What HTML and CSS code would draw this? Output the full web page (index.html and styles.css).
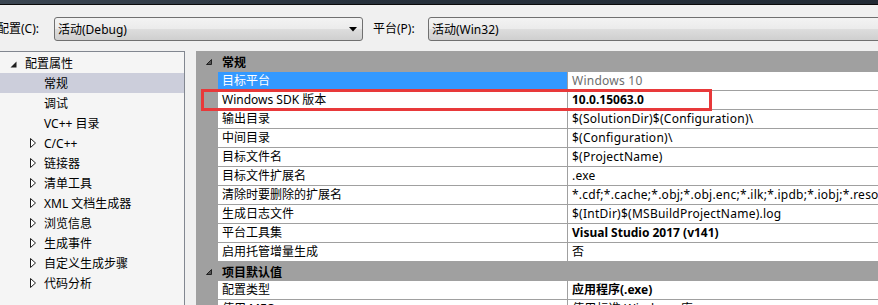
FILE: index.html
```html
<!DOCTYPE html>
<html>
<head>
<meta charset="utf-8">
<link rel="stylesheet" href="styles.css">
</head>
<body>
<div class="titlebar"></div>
<div class="toolbar">
  <span class="lbl cfg">配置(C):</span>
  <div class="combo c1"><span class="ctext">活动(Debug)</span><svg class="arrow" width="8" height="5" viewBox="0 0 8 5"><polygon points="0,0 8,0 4,4.5" fill="#000"/></svg></div>
  <span class="lbl plat">平台(P):</span>
  <div class="combo c2"><span class="ctext">活动(Win32)</span></div>
</div>
<div class="main">
  <div class="tree">
    <div class="node lvl0"><svg class="exp" width="7" height="7" viewBox="0 0 7 7"><polygon points="6.5,0.5 6.5,6.5 0.5,6.5" fill="#1e1e1e"/></svg><span>配置属性</span></div>
    <div class="node lvl1 sel"><span>常规</span></div>
    <div class="node lvl1"><span>调试</span></div>
    <div class="node lvl1"><span>VC++ 目录</span></div>
    <div class="node lvl1"><svg class="col" width="6" height="10" viewBox="0 0 6 10"><polygon points="0.5,0.5 5.5,5 0.5,9.5" fill="#fff" stroke="#1e1e1e" stroke-width="1"/></svg><span>C/C++</span></div>
    <div class="node lvl1"><svg class="col" width="6" height="10" viewBox="0 0 6 10"><polygon points="0.5,0.5 5.5,5 0.5,9.5" fill="#fff" stroke="#1e1e1e" stroke-width="1"/></svg><span>链接器</span></div>
    <div class="node lvl1"><svg class="col" width="6" height="10" viewBox="0 0 6 10"><polygon points="0.5,0.5 5.5,5 0.5,9.5" fill="#fff" stroke="#1e1e1e" stroke-width="1"/></svg><span>清单工具</span></div>
    <div class="node lvl1"><svg class="col" width="6" height="10" viewBox="0 0 6 10"><polygon points="0.5,0.5 5.5,5 0.5,9.5" fill="#fff" stroke="#1e1e1e" stroke-width="1"/></svg><span>XML 文档生成器</span></div>
    <div class="node lvl1"><svg class="col" width="6" height="10" viewBox="0 0 6 10"><polygon points="0.5,0.5 5.5,5 0.5,9.5" fill="#fff" stroke="#1e1e1e" stroke-width="1"/></svg><span>浏览信息</span></div>
    <div class="node lvl1"><svg class="col" width="6" height="10" viewBox="0 0 6 10"><polygon points="0.5,0.5 5.5,5 0.5,9.5" fill="#fff" stroke="#1e1e1e" stroke-width="1"/></svg><span>生成事件</span></div>
    <div class="node lvl1"><svg class="col" width="6" height="10" viewBox="0 0 6 10"><polygon points="0.5,0.5 5.5,5 0.5,9.5" fill="#fff" stroke="#1e1e1e" stroke-width="1"/></svg><span>自定义生成步骤</span></div>
    <div class="node lvl1"><svg class="col" width="6" height="10" viewBox="0 0 6 10"><polygon points="0.5,0.5 5.5,5 0.5,9.5" fill="#fff" stroke="#1e1e1e" stroke-width="1"/></svg><span>代码分析</span></div>
  </div>
  <div class="grid">
    <div class="cat first"><span class="mg"><svg width="6" height="6" viewBox="0 0 6 6"><polygon points="5.5,0.5 5.5,5.5 0.5,5.5" fill="#555" stroke="#222" stroke-width="1"/></svg></span><span class="ctitle">常规</span></div>
    <div class="row sel"><span class="mg"></span><span class="nm">目标平台</span><span class="val grey">Windows 10</span></div>
    <div class="row"><span class="mg"></span><span class="nm">Windows SDK 版本</span><span class="val bold">10.0.15063.0</span></div>
    <div class="row"><span class="mg"></span><span class="nm">输出目录</span><span class="val">$(SolutionDir)$(Configuration)\</span></div>
    <div class="row"><span class="mg"></span><span class="nm">中间目录</span><span class="val">$(Configuration)\</span></div>
    <div class="row"><span class="mg"></span><span class="nm">目标文件名</span><span class="val">$(ProjectName)</span></div>
    <div class="row"><span class="mg"></span><span class="nm">目标文件扩展名</span><span class="val">.exe</span></div>
    <div class="row"><span class="mg"></span><span class="nm">清除时要删除的扩展名</span><span class="val">*.cdf;*.cache;*.obj;*.obj.enc;*.ilk;*.ipdb;*.iobj;*.resources;*.tlb;*.tli;*.tlh;*.tmp</span></div>
    <div class="row"><span class="mg"></span><span class="nm">生成日志文件</span><span class="val">$(IntDir)$(MSBuildProjectName).log</span></div>
    <div class="row"><span class="mg"></span><span class="nm">平台工具集</span><span class="val bold">Visual Studio 2017 (v141)</span></div>
    <div class="row"><span class="mg"></span><span class="nm">启用托管增量生成</span><span class="val">否</span></div>
    <div class="cat"><span class="mg"><svg width="6" height="6" viewBox="0 0 6 6"><polygon points="5.5,0.5 5.5,5.5 0.5,5.5" fill="#555" stroke="#222" stroke-width="1"/></svg></span><span class="ctitle">项目默认值</span></div>
    <div class="row"><span class="mg"></span><span class="nm">配置类型</span><span class="val bold">应用程序(.exe)</span></div>
    <div class="row"><span class="mg"></span><span class="nm">使用 MFC</span><span class="val">使用标准 Windows 库</span></div>
  </div>
</div>
<div class="redbox"></div>
</body>
</html>
```
FILE: styles.css
```css
html, body {
  margin: 0;
  padding: 0;
}
body {
  width: 878px;
  height: 305px;
  overflow: hidden;
  background: #f0f0f0;
  font-family: "Noto Sans", "Noto Sans CJK SC", sans-serif;
  font-size: 12px;
  color: #000;
  position: relative;
}
.titlebar {
  height: 4px;
  background: linear-gradient(90deg, #3b4652, #27313c 40%, #222b35);
  border-bottom: 1px solid #0a0a0a;
}
.toolbar {
  display: flex;
  align-items: center;
  padding-top: 12px;
  height: 24px;
  margin-bottom: 10px;
  white-space: nowrap;
}
.lbl {
  line-height: 24px;
}
.cfg {
  margin-left: -3px;
  width: 57px;
}
.plat {
  margin-left: 10px;
  width: 55px;
}
.combo {
  height: 24px;
  box-sizing: border-box;
  border: 1px solid #707070;
  border-radius: 3px;
  background: linear-gradient(#f3f3f3 0%, #ebebeb 48%, #dddddd 52%, #cfcfcf 100%);
  display: flex;
  align-items: center;
  padding-left: 3px;
}
.c1 {
  width: 309px;
}
.c2 {
  flex: 1;
  margin-right: -10px;
}
.ctext {
  flex: 1;
}
.arrow {
  margin-right: 5px;
}
.main {
  display: flex;
  align-items: flex-start;
  height: 254px;
}
.tree {
  width: 184px;
  margin-left: -1px;
  height: 260px;
  border: 1px solid #828790;
  background: #f5f5f5;
  padding-top: 1px;
  flex: none;
}
.node {
  height: 20px;
  display: flex;
  align-items: center;
  position: relative;
  white-space: nowrap;
}
.node.sel {
  background: #cccedb;
}
.lvl0 {
  padding-left: 25px;
}
.lvl1 {
  padding-left: 44px;
}
.exp {
  position: absolute;
  left: 10px;
  top: 8px;
}
.col {
  position: absolute;
  left: 30px;
  top: 5px;
}
.grid {
  margin-left: 11px;
  flex: 1;
  background: #fff;
  overflow: hidden;
  white-space: nowrap;
}
.cat {
  display: flex;
  align-items: center;
  height: 19px;
  background: #a0a0a0;
}
.cat.first {
  height: 21px;
}
.cat .mg {
  width: 22px;
  display: flex;
  justify-content: flex-start;
  padding-left: 10px;
  box-sizing: border-box;
}
.ctitle {
  font-weight: bold;
  padding-left: 4px;
}
.row {
  display: flex;
  height: 19px;
}
.row .mg {
  width: 22px;
  flex: none;
  background: #a0a0a0;
}
.nm {
  width: 345px;
  flex: none;
  padding-left: 4px;
  line-height: 18px;
  border-bottom: 1px solid #a0a0a0;
  overflow: hidden;
}
.row.sel .nm {
  background: #3399ff;
  color: #fff;
}
.val {
  flex: 1;
  border-left: 1px solid #a0a0a0;
  border-bottom: 1px solid #a0a0a0;
  padding-left: 4px;
  line-height: 18px;
  overflow: hidden;
  letter-spacing: 0.25px;
}
.grey {
  color: #6d6d6d;
}
.bold {
  font-weight: bold;
  letter-spacing: 0;
}
.redbox {
  position: absolute;
  left: 201px;
  top: 89px;
  width: 511px;
  height: 22px;
  box-sizing: border-box;
  border: 3px solid #e8393a;
}
```
